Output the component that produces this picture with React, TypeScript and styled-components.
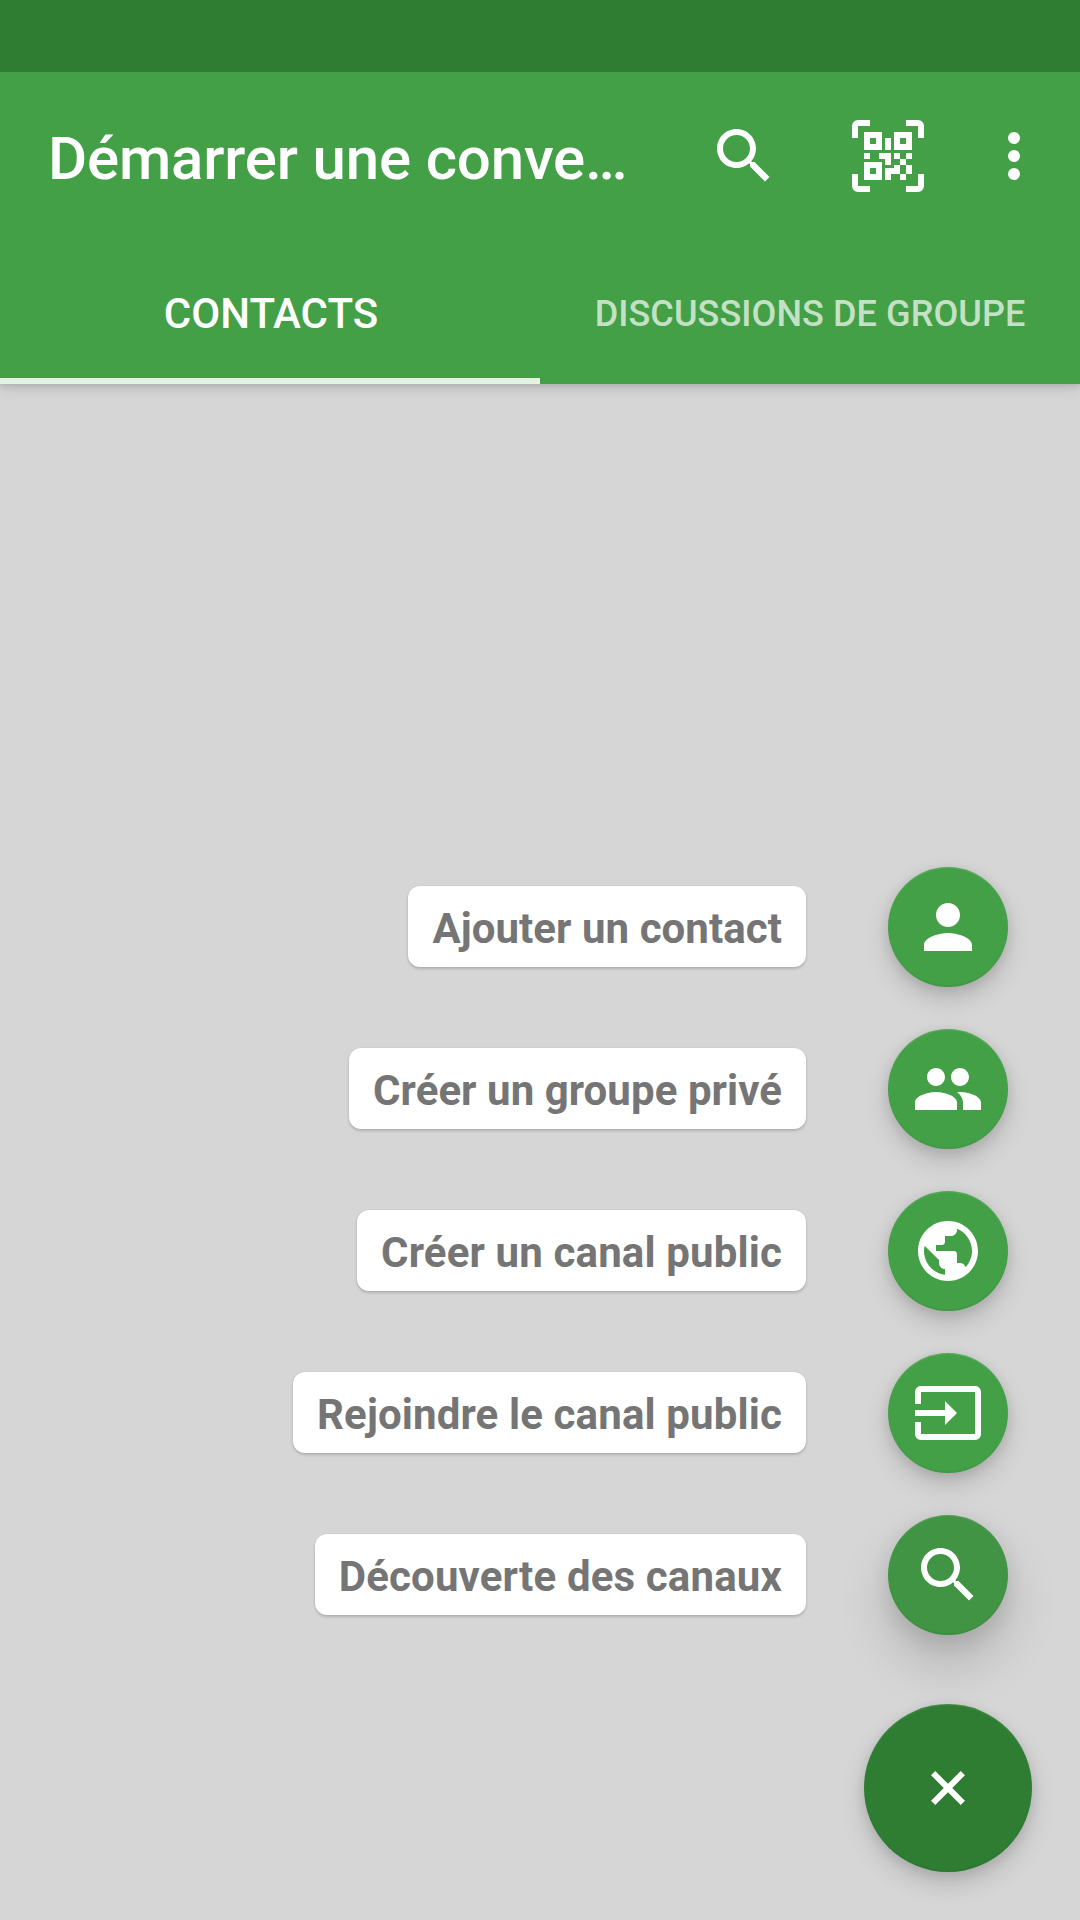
import React from 'react';
import styled, { createGlobalStyle } from 'styled-components';

const GlobalStyle = createGlobalStyle`
  *, *::before, *::after { box-sizing: border-box; }
  body { margin: 0; background: #d6d6d6; }
  button { border: 0; padding: 0; margin: 0; background: none; font: inherit; color: inherit; }
`;

const Screen = styled.div`
  width: 1080px;
  height: 1920px;
  display: flex;
  flex-direction: column;
  overflow: hidden;
  background: #d6d6d6;
  font-family: Roboto, 'Noto Sans', sans-serif;
`;

const StatusBar = styled.div`
  flex: none;
  height: 72px;
  z-index: 1;
  background: #2e7d32;
`;

const Header = styled.header`
  flex: none;
  height: 312px;
  display: flex;
  flex-direction: column;
  background: #43a047;
  color: #fff;
  box-shadow: 0 2px 6px rgba(0, 0, 0, 0.1), 0 5px 14px rgba(0, 0, 0, 0.11);
`;

const Toolbar = styled.div`
  height: 168px;
  display: flex;
  align-items: center;
  padding: 0 48px;
`;

const Title = styled.h1`
  flex: 1;
  margin: 0;
  padding-top: 6px;
  font-size: 60px;
  line-height: 70px;
  font-weight: 500;
  letter-spacing: -0.17px;
  white-space: nowrap;
`;

const Actions = styled.div`
  display: flex;
  align-items: center;
  gap: 72px;
`;

const ActionButton = styled.button<{ $width?: number }>`
  width: ${(p) => p.$width ?? 72}px;
  height: 72px;
  display: flex;
  justify-content: center;
`;

const Tabs = styled.nav`
  flex: 1;
  display: grid;
  grid-template-columns: 1fr 1fr;
`;

const Tab = styled.button<{ $active?: boolean }>`
  display: flex;
  align-items: center;
  justify-content: center;
  padding: ${(p) => (p.$active ? '8px 0 0 2px' : '10px 0 0')};
  border-bottom: 6px solid ${(p) => (p.$active ? '#e8f2e4' : 'transparent')};
  color: ${(p) => (p.$active ? '#fff' : 'rgba(255, 255, 255, 0.7)')};
  font-size: ${(p) => (p.$active ? 42 : 36)}px;
  font-weight: 500;
  letter-spacing: ${(p) => (p.$active ? 0 : 0.08)}px;
  white-space: nowrap;
`;

const Content = styled.main`
  flex: 1;
  display: flex;
  flex-direction: column;
  align-items: flex-end;
  justify-content: flex-end;
  padding: 0 48px 48px 0;
`;

const SpeedDial = styled.ul`
  list-style: none;
  margin: 0 0 69px;
  padding: 0 24px 0 0;
  display: flex;
  flex-direction: column;
  gap: 42px;
`;

const DialRow = styled.li`
  height: 120px;
  display: flex;
  align-items: center;
  justify-content: flex-end;
  gap: 82px;
`;

const DialLabel = styled.span<{ $tracking: number }>`
  height: 81px;
  margin-bottom: 1px;
  padding: 4px 24px 0;
  display: flex;
  align-items: center;
  border-radius: 12px;
  background: #fff;
  color: #757575;
  font-size: 42px;
  line-height: 49px;
  font-weight: 700;
  letter-spacing: ${(p) => p.$tracking}px;
  white-space: nowrap;
  box-shadow: 0 2px 3px rgba(0, 0, 0, 0.17), 0 0 2px rgba(0, 0, 0, 0.08);
`;

const Fab = styled.button<{ $size: number; $color: string; $raised?: boolean }>`
  flex: none;
  width: ${(p) => p.$size}px;
  height: ${(p) => p.$size}px;
  display: flex;
  align-items: center;
  justify-content: center;
  border-radius: 50%;
  background: ${(p) => p.$color};
  box-shadow:
    inset 0 2px 2px -1px rgba(255, 255, 255, 0.14),
    inset 0 -2px 2px -1px rgba(0, 0, 0, 0.08),
    ${(p) =>
      p.$raised
        ? '0 28px 50px rgba(0, 0, 0, 0.17), 0 6px 22px rgba(0, 0, 0, 0.11)'
        : '0 12px 24px rgba(0, 0, 0, 0.15), 0 3px 12px rgba(0, 0, 0, 0.1)'};
`;

const Glyph = styled.svg`
  display: block;
  width: 72px;
  height: 72px;
  fill: #fff;
`;

const TurnedGlyph = styled(Glyph)`
  transform: rotate(45deg);
`;

const DotsGlyph = styled(Glyph)`
  flex: none;
`;

const SEARCH =
  'M15.5 14h-.79l-.28-.27C15.41 12.59 16 11.11 16 9.5 16 5.91 13.09 3 9.5 3S3 5.91 3 9.5 5.91 16 9.5 16c1.61 0 3.09-.59 4.23-1.57l.27.28v.79l5 4.99L20.49 19l-4.99-5zm-6 0C7.01 14 5 11.99 5 9.5S7.01 5 9.5 5 14 7.01 14 9.5 11.99 14 9.5 14z';
const PERSON =
  'M12 12c2.21 0 4-1.79 4-4s-1.79-4-4-4-4 1.79-4 4 1.79 4 4 4zm0 2c-2.67 0-8 1.34-8 4v2h16v-2c0-2.66-5.33-4-8-4z';
const PEOPLE =
  'M16 11c1.66 0 2.99-1.34 2.99-3S17.66 5 16 5c-1.66 0-3 1.34-3 3s1.34 3 3 3zm-8 0c1.66 0 2.99-1.34 2.99-3S9.66 5 8 5C6.34 5 5 6.34 5 8s1.34 3 3 3zm0 2c-2.33 0-7 1.17-7 3.5V19h14v-2.5c0-2.33-4.67-3.5-7-3.5zm8 0c-.29 0-.62.02-.97.05 1.16.84 1.97 1.97 1.97 3.45V19h6v-2.5c0-2.33-4.67-3.5-7-3.5z';
const GLOBE =
  'M12 2C6.48 2 2 6.48 2 12s4.48 10 10 10 10-4.48 10-10S17.52 2 12 2zm-1 17.93c-3.95-.49-7-3.85-7-7.93 0-.62.08-1.21.21-1.79L9 15v1c0 1.1.9 2 2 2v1.93zm6.9-2.54c-.26-.81-1-1.39-1.9-1.39h-1v-3c0-.55-.45-1-1-1H8v-2h2c.55 0 1-.45 1-1V7h2c1.1 0 2-.9 2-2v-.41c2.93 1.19 5 4.06 5 7.41 0 2.08-.8 3.97-2.1 5.39z';
const JOIN =
  'M21 3.01H3c-1.1 0-2 .9-2 2V9h2V4.99h18v14.03H3V15H1v4.01c0 1.1.9 1.98 2 1.98h18c1.1 0 2-.88 2-1.98v-14c0-1.11-.9-2-2-2zM11 16l4-4-4-4v3H1v2h10v3z';

const Icon = ({ path }: { path: string }) => (
  <Glyph viewBox="0 0 24 24">
    <path d={path} />
  </Glyph>
);

const QrIcon = () => (
  <Glyph viewBox="0 0 72 72">
    {/* scanner frame corners */}
    <path d="M0 18V6a6 6 0 0 1 6-6h12v6H6v12zM54 0h12a6 6 0 0 1 6 6v12h-6V6H54zM72 54v12a6 6 0 0 1-6 6H54v-6h12V54zM18 72H6a6 6 0 0 1-6-6V54h6v12h12z" />
    {/* finder squares */}
    <path
      fillRule="evenodd"
      d="M12 12h18v18H12zM18 18v6h6v-6zM42 12h18v18H42zM48 18v6h6v-6zM12 42h18v18H12zM18 48v6h6v-6z"
    />
    {/* data modules */}
    <path d="M33 18h6v12h-6zM12 33h6v6h-6zM27 33h12v12h-6v-6h-6zM42 33h6v6h-6zM54 33h6v6h-6zM48 39h6v6h-6zM54 45h6v9h-6zM48 54h6v6h-6zM42 45h6v9h-9v6h-6V48h9z" />
  </Glyph>
);

const entries = [
  { label: 'Ajouter un contact', path: PERSON, tracking: 0.06 },
  { label: 'Créer un groupe privé', path: PEOPLE, tracking: 0.06 },
  { label: 'Créer un canal public', path: GLOBE, tracking: 0.14 },
  { label: 'Rejoindre le canal public', path: JOIN, tracking: 0.13 },
  { label: 'Découverte des canaux', path: SEARCH, tracking: 0.15, raised: true },
];

export default function App() {
  return (
    <>
      <GlobalStyle />
      <Screen>
        <StatusBar />
        <Header>
          <Toolbar>
            <Title>Démarrer une conve…</Title>
            <Actions>
              <ActionButton aria-label="Rechercher">
                <Icon path={SEARCH} />
              </ActionButton>
              <ActionButton aria-label="Scanner un code QR">
                <QrIcon />
              </ActionButton>
              <ActionButton $width={36} aria-label="Plus d’options">
                <DotsGlyph viewBox="0 0 24 24">
                  <circle cx="12" cy="6" r="2" />
                  <circle cx="12" cy="12" r="2" />
                  <circle cx="12" cy="18" r="2" />
                </DotsGlyph>
              </ActionButton>
            </Actions>
          </Toolbar>
          <Tabs>
            <Tab $active>CONTACTS</Tab>
            <Tab>DISCUSSIONS DE GROUPE</Tab>
          </Tabs>
        </Header>
        <Content>
          <SpeedDial>
            {entries.map((e) => (
              <DialRow key={e.label}>
                <DialLabel $tracking={e.tracking}>{e.label}</DialLabel>
                <Fab
                  $size={120}
                  $color={e.raised ? '#409443' : '#43a047'}
                  $raised={e.raised}
                  aria-label={e.label}
                >
                  <Icon path={e.path} />
                </Fab>
              </DialRow>
            ))}
          </SpeedDial>
          <Fab $size={168} $color="#2e7d32" aria-label="Fermer">
            <TurnedGlyph viewBox="0 0 24 24">
              <path d="M19 13h-6v6h-2v-6H5v-2h6V5h2v6h6v2z" />
            </TurnedGlyph>
          </Fab>
        </Content>
      </Screen>
    </>
  );
}
